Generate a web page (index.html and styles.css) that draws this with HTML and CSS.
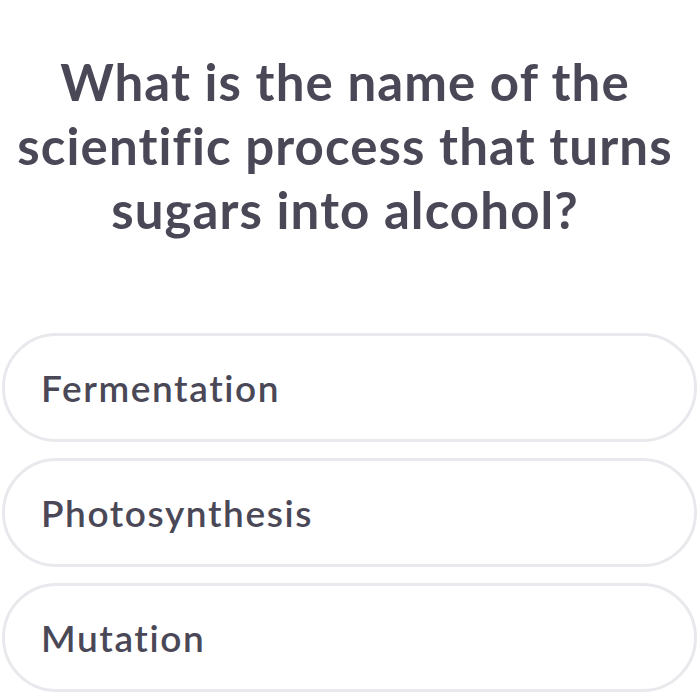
FILE: index.html
```html
<!DOCTYPE html>
<html>
<head>
<meta charset="utf-8">
<link rel="stylesheet" href="styles.css">
</head>
<body>
<main class="quiz">
  <h1 class="question">What is the name of the scientific process that turns sugars into alcohol?</h1>
  <ul class="options">
    <li class="option">Fermentation</li>
    <li class="option">Photosynthesis</li>
    <li class="option">Mutation</li>
  </ul>
</main>
</body>
</html>
```
FILE: styles.css
```css
html, body {
  margin: 0;
  padding: 0;
  background: #ffffff;
}
.quiz {
  font-family: Lato, "Noto Sans", sans-serif;
  color: #4a4857;
  padding: 50px 3px 0 2px;
}
.question {
  margin: 0;
  width: 686px;
  text-align: center;
  font-size: 51px;
  font-weight: 700;
  line-height: 64px;
  letter-spacing: 1.1px;
  font-variant-ligatures: none;
}
.options {
  list-style: none;
  margin: 91px 0 0 0;
  padding: 0;
  display: flex;
  flex-direction: column;
  gap: 16px;
}
.option {
  box-sizing: border-box;
  height: 109px;
  border: 3px solid #e9e8ec;
  border-radius: 55px;
  display: flex;
  align-items: center;
  padding-left: 36px;
  font-size: 37px;
  font-weight: 600;
  letter-spacing: 1.6px;
  font-variant-ligatures: none;
}
```
